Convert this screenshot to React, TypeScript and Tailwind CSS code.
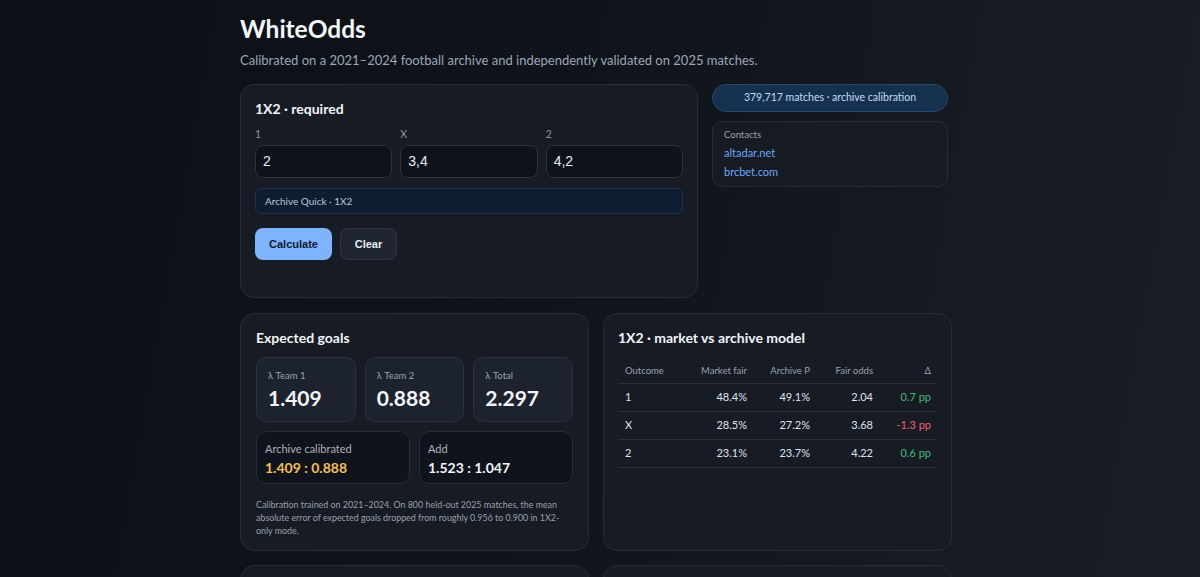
import React from "react";

const sans = "font-['Lato','Noto_Sans','Liberation_Sans',sans-serif]";
const arial = "font-['Liberation_Sans','Arial',sans-serif]";

type Row = { outcome: string; market: string; archive: string; fair: string; delta: string; up: boolean };

const rows: Row[] = [
  { outcome: "1", market: "48.4%", archive: "49.1%", fair: "2.04", delta: "0.7 pp", up: true },
  { outcome: "X", market: "28.5%", archive: "27.2%", fair: "3.68", delta: "-1.3 pp", up: false },
  { outcome: "2", market: "23.1%", archive: "23.7%", fair: "4.22", delta: "0.6 pp", up: true },
];

function OddsInput({ label, value }: { label: string; value: string }) {
  return (
    <div className="flex flex-col">
      <span className="text-[10.5px] leading-[14px] text-[#8b95a3]">{label}</span>
      <div
        className={`mt-[4px] flex h-[33px] items-center rounded-[8px] border border-[#2b3240] bg-[#0e1219] px-[7px] text-[14px] text-[#e8edf3] ${arial}`}
      >
        {value}
      </div>
    </div>
  );
}

function StatTile({ label, value }: { label: string; value: string }) {
  return (
    <div className="h-[65px] rounded-[10px] border border-[#2a3140] bg-[#1c222e] px-[11px] pt-[11px]">
      <div className="text-[9.5px] leading-[14px] text-[#98a2b0]">{label}</div>
      <div className="mt-[2px] text-[21px] font-bold leading-[26px] text-[#f1f4f8]">{value}</div>
    </div>
  );
}

function PairTile({ label, value, accent }: { label: string; value: string; accent: string }) {
  return (
    <div className="h-[53px] rounded-[10px] border border-[#262d3a] bg-[#0f131b] px-[8px] pt-[9px]">
      <div className="text-[11px] leading-[16px] text-[#a9b2be]">{label}</div>
      <div className={`mt-[2px] text-[14px] font-bold leading-[18px] ${accent}`}>{value}</div>
    </div>
  );
}

export default function App() {
  return (
    <div
      className={`min-h-screen bg-[linear-gradient(100deg,#0c1016_0%,#0f131a_45%,#1b1f26_100%)] ${sans}`}
    >
      <div className="mx-auto w-[720px] pt-[14px] pb-[40px]">
        <div className="w-[712px]">
          <h1 className="text-[24.5px] font-bold leading-[30px] text-[#f3f6fb]">WhiteOdds</h1>
          <p className="mt-[6px] text-[13px] leading-[20px] text-[#9aa7b6]">
            Calibrated on a 2021–2024 football archive and independently validated on 2025 matches.
          </p>

          {/* odds entry + side info */}
          <div className="mt-[14px] grid grid-cols-[458px_236px] gap-[14px]">
            <section className="h-[214px] rounded-[14px] border border-[#262c38] bg-[#171b24] px-[14px] pt-[15px]">
              <h2 className="text-[14px] font-bold leading-[18px] text-[#f1f4f8]">1X2 · required</h2>
              <div className="mt-[9px] grid grid-cols-3 gap-[8px]">
                <OddsInput label="1" value="2" />
                <OddsInput label="X" value="3,4" />
                <OddsInput label="2" value="4,2" />
              </div>
              <div className="mt-[10px] flex h-[26px] items-center rounded-[6px] border border-[#1e3350] bg-[#0f1d30] px-[9px] text-[10px] text-[#b8c7d9]">
                Archive Quick · 1X2
              </div>
              <div className={`mt-[14px] flex gap-[8px] ${arial}`}>
                <button className="h-[32px] w-[77px] rounded-[8px] bg-[#7db3ff] text-[11px] font-bold text-[#0c1a2e]">
                  Calculate
                </button>
                <button className="h-[32px] w-[57px] rounded-[8px] border border-[#2e3645] bg-[#1f2533] text-[11px] font-bold text-[#e8edf3]">
                  Clear
                </button>
              </div>
            </section>

            <aside className="flex flex-col gap-[9px]">
              <div className="flex h-[28px] items-center justify-center rounded-full border border-[#24476d] bg-[#163150] text-[10.5px] text-[#c6daf0]">
                379,717 matches · archive calibration
              </div>
              <div className="h-[66px] rounded-[10px] border border-[#262c38] bg-[#161a22] px-[11px] pt-[6px]">
                <div className="text-[9.5px] leading-[14px] text-[#9aa3b0]">Contacts</div>
                <div className="mt-[1px] text-[11px] leading-[19px] text-[#6ea8fe]">altadar.net</div>
                <div className="text-[11px] leading-[19px] text-[#6ea8fe]">brcbet.com</div>
              </div>
            </aside>
          </div>

          <div className="mt-[15px] grid grid-cols-2 gap-[14px]">
            {/* expected goals */}
            <section className="h-[238px] rounded-[14px] border border-[#262c38] bg-[#171b24] px-[15px] pt-[15px]">
              <h2 className="text-[14px] font-bold leading-[18px] text-[#f1f4f8]">Expected goals</h2>
              <div className="mt-[10px] grid grid-cols-3 gap-[9px]">
                <StatTile label="λ Team 1" value="1.409" />
                <StatTile label="λ Team 2" value="0.888" />
                <StatTile label="λ Total" value="2.297" />
              </div>
              <div className="mt-[9px] grid grid-cols-2 gap-[9px]">
                <PairTile label="Archive calibrated" value="1.409 : 0.888" accent="text-[#f5c04e]" />
                <PairTile label="Add" value="1.523 : 1.047" accent="text-[#f1f4f8]" />
              </div>
              <p className="mt-[14px] text-[8.9px] leading-[13px] text-[#98a1ae]">
                Calibration trained on 2021–2024. On 800 held-out 2025 matches, the mean absolute error of expected goals
                dropped from roughly 0.956 to 0.900 in 1X2-only mode.
              </p>
            </section>

            {/* market vs model table */}
            <section className="h-[238px] rounded-[14px] border border-[#262c38] bg-[#171b24] px-[14px] pt-[15px]">
              <h2 className="text-[14px] font-bold leading-[18px] text-[#f1f4f8]">1X2 · market vs archive model</h2>
              <div className="mt-[13px]">
                <div className="grid h-[24px] grid-cols-[70px_65px_63px_63px_58px] items-center border-b border-[#2a303c] text-[9.5px] text-[#98a2b0]">
                  <span className="pl-[7px]">Outcome</span>
                  <span className="pr-[6px] text-right">Market fair</span>
                  <span className="pr-[6px] text-right">Archive P</span>
                  <span className="pr-[6px] text-right">Fair odds</span>
                  <span className="pr-[6px] text-right">Δ</span>
                </div>
                {rows.map((r) => (
                  <div
                    key={r.outcome}
                    className="grid h-[28px] grid-cols-[70px_65px_63px_63px_58px] items-center border-b border-[#2a303c] text-[11px] text-[#dfe5ec]"
                  >
                    <span className="pl-[7px]">{r.outcome}</span>
                    <span className="pr-[6px] text-right">{r.market}</span>
                    <span className="pr-[6px] text-right">{r.archive}</span>
                    <span className="pr-[6px] text-right">{r.fair}</span>
                    <span className={`pr-[6px] text-right ${r.up ? "text-[#3dbb7c]" : "text-[#f0616f]"}`}>{r.delta}</span>
                  </div>
                ))}
              </div>
            </section>
          </div>

          <div className="mt-[14px] grid grid-cols-2 gap-[14px]">
            <section className="h-[200px] rounded-[14px] border border-[#262c38] bg-[#171b24]" />
            <section className="h-[200px] rounded-[14px] border border-[#262c38] bg-[#171b24]" />
          </div>
        </div>
      </div>
    </div>
  );
}
